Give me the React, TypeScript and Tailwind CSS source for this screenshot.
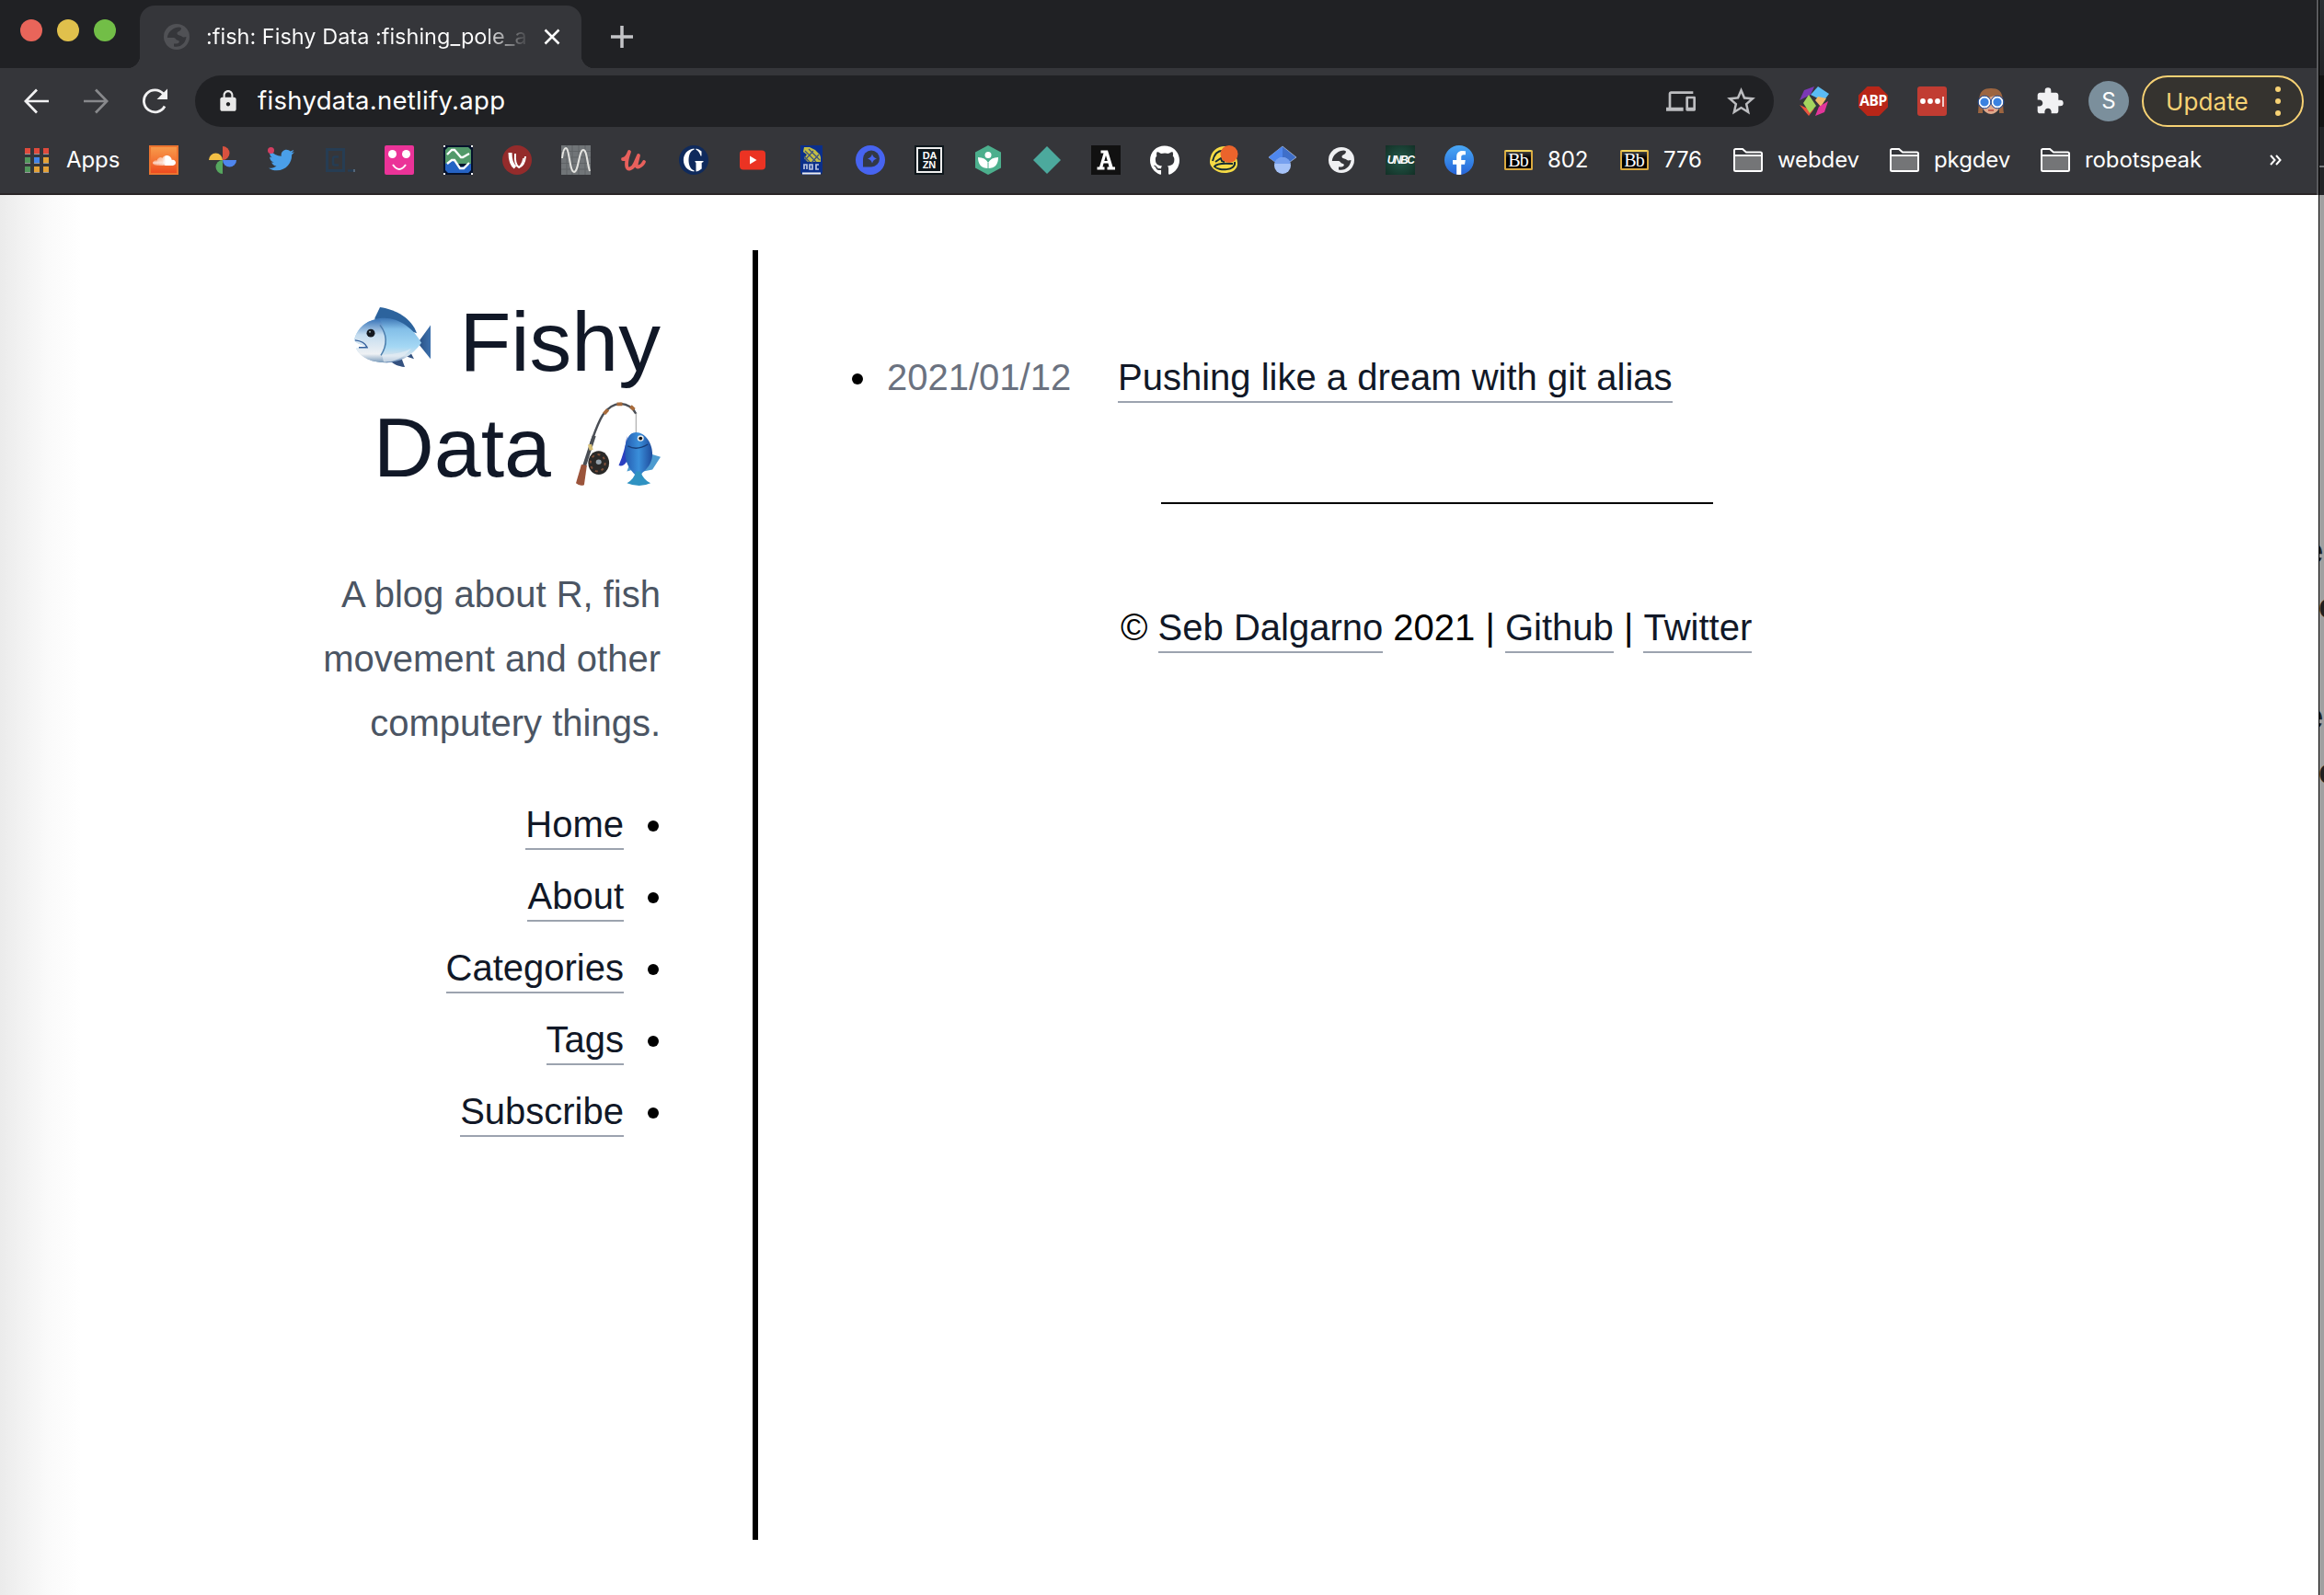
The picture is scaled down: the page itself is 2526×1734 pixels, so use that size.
import React from "react";
import { FaTwitter, FaGithub, FaSoundcloud, FaFacebookF } from "react-icons/fa";
import { MdOutlineDevices, MdStarBorder, MdExtension, MdLock } from "react-icons/md";

const Box = ({ children, className = "" }: { children?: React.ReactNode; className?: string }) => (
  <span className={"flex h-8 w-8 shrink-0 items-center justify-center " + className}>{children}</span>
);

const Svg = ({ children }: { children: React.ReactNode }) => (
  <svg viewBox="0 0 32 32" className="h-8 w-8 shrink-0">{children}</svg>
);

const Globe = ({ fg, bg, className }: { fg: string; bg: string; className: string }) => (
  <svg viewBox="0 0 28 28" className={className}>
    <circle cx="14" cy="14" r="14" fill={fg} />
    <path d="M17 3.500C11 3.500 4.500 8 3.800 15h6.700c2.500 0 2.500 2.500 4.500 2.800 2 .3 2.500 2 1 3-1 .8-3 .8-5 .8v2.800c7.500 1.500 13-4 13.500-10.500-2 .3-3 1.200-5-.3s-4.500-.7-5-3c-.3-2.500 4.500-2 4.500-6z" fill={bg} />
  </svg>
);

const Folder = () => (
  <svg viewBox="0 0 32 26" className="h-[26px] w-8 shrink-0">
    <path d="M1 8h30v16.500H1z" fill="#747577" />
    <path d="M1 8V2.500Q1 1 2.500 1H10l4 3.500h15.500Q31 4.500 31 6v17.500q0 1.500-1.500 1.500h-27Q1 25 1 23.500zh30" fill="none" stroke="#fff" strokeWidth="2" />
    <path d="M1 8h30" stroke="#fff" strokeWidth="2" />
  </svg>
);

const Blackboard = () => (
  <span className="flex h-8 w-8 shrink-0 items-center justify-center">
    <span className="flex h-[22px] w-[31px] items-center justify-center rounded-[2px] border-2 border-[#d9a93f] border-t-[#f2d25a] bg-gradient-to-b from-[#444] via-[#000] to-[#000] font-['Liberation_Serif',serif] text-[20px] leading-none tracking-[-1px] text-white">Bb</span>
  </span>
);

const bookmarks = [
  <Box className="bg-gradient-to-b from-[#f79a4a] to-[#ee4a1f] border-2 border-[#ec7430] text-white"><FaSoundcloud size={25} /></Box>,
  <Svg>
    <path d="M16 16V1a7.500 7.500 0 0 1 0 15z" fill="#d8513f" />
    <path d="M16 16h15a7.500 7.500 0 0 1-15 0z" fill="#4f86ee" />
    <path d="M16 16v15a7.500 7.500 0 0 1 0-15z" fill="#56a75e" />
    <path d="M16 16H1a7.500 7.500 0 0 1 15 0z" fill="#f2bf45" />
  </Svg>,
  <Box className="relative text-[#4a9fe9]"><FaTwitter size={28} /><i className="absolute left-px top-[2px] h-[7px] w-[7px] rounded-full bg-[#d43f61]" /></Box>,
  <Svg>
    <path d="M1.500 4.500h18v23h-18z" fill="none" stroke="#263d53" strokeWidth="3" />
    <path d="M14 12.500h-4q-2 0-2 2v5q0 2 2 2h4M24 27.500h6" fill="none" stroke="#263d53" strokeWidth="2.500" />
    <path d="M31 26v3" stroke="#7397b8" />
  </Svg>,
  <Svg>
    <rect width="32" height="32" rx="2" fill="#eb3398" />
    <circle cx="8.500" cy="9.500" r="4.500" fill="#fff" /><circle cx="23.500" cy="9.500" r="4.500" fill="#fff" />
    <path d="M9 21q7 10 14 0" fill="none" stroke="#fff" strokeWidth="2" />
  </Svg>,
  <Svg>
    <rect width="32" height="32" fill="#06122b" />
    <path d="M0 0h2v2H0zM30 0h2v2h-2zM0 30h2v2H0zM30 30h2v2h-2z" fill="#fff" />
    <path d="M5 2h22l3 3v15H2V5z" fill="#53996a" />
    <path d="M2 20l8-4 8 8 12-4v7l-3 3H5l-3-3z" fill="#2563c4" />
    <path d="M4 10l5-5h3l7 8h2l7-4M4 20l5-4h3l6 9h4l6-6" fill="none" stroke="#fff" strokeWidth="2.300" />
  </Svg>,
  <Svg>
    <circle cx="16" cy="16" r="16" fill="#942b2b" />
    <path d="M8.500 8q0 12 5.500 16" fill="none" stroke="#fff" strokeWidth="4" />
    <path d="M14 9q-1 12 4 15Q24 22 25 12" fill="none" stroke="#fff" strokeWidth="2" />
    <path d="M18 24q4-4 5-10" fill="none" stroke="#fff" strokeWidth="1.500" />
  </Svg>,
  <Svg>
    <rect width="32" height="32" fill="#717578" />
    <path d="M0 6.500h32M0 13h32M0 19.500h32M0 26h32M6 0v32M12 0v32M19 0v32M26 0v32" stroke="#606467" />
    <path d="M1 14C2 6 3 3 5 3c4 0 4 26 9 26S19 5 24 5c4 0 4 14 7 23" fill="none" stroke="#e4e4e0" strokeWidth="2" />
  </Svg>,
  <Svg>
    <path d="M3 15q4 0 7-8-3 8-3 14c0 8 7 4 9-1l4-9-2 8c-1 5 1 5 3 4q3-1 5-5" fill="none" stroke="#e8605c" strokeWidth="3.800" strokeLinecap="round" strokeLinejoin="round" />
  </Svg>,
  <Svg>
    <circle cx="16" cy="16" r="16" fill="#0f2a5c" />
    <path d="M16.500 3.500C1 5 1 27 16.500 28.500v-1.300c-8-1.200-8-21.200 0-22.400zM18.500 3.500q3 .5 6 3v5h-1q-1.500-5-5-6.700zM17.500 17h9v1l-1.800 1v6.500q-3 2.500-6.200 3V19l-1-1z" fill="#fff" />
  </Svg>,
  <Svg>
    <rect x="2" y="5.500" width="28" height="21" rx="4" fill="#eb3323" />
    <path d="M13 11.500v9l7.500-4.500z" fill="#fff" />
  </Svg>,
  <Svg>
    <path d="M4 0h24v28q0 4-4 4H8q-4 0-4-4z" fill="#0b2f8a" />
    <path d="M8 2h6l6 3 5 5 1 3v5H12l-4-4 3-4-4-3z" fill="#c2bd45" />
    <path d="M9 6l12 12M13 4l12 12M8 12l6 6M18 6l-9 10M24 10l-8 9" stroke="#3a5080" strokeWidth="1.200" />
    <path d="M8 26v-5h3v5M14 26v-5h3v5zM24 21h-3v5h3" fill="none" stroke="#b9c3e0" strokeWidth="1.700" />
    <path d="M6 30.500h20" stroke="#eee" strokeWidth="2" />
  </Svg>,
  <Svg>
    <circle cx="16" cy="16" r="16" fill="#4764f0" />
    <path d="M8 24V15a9 9 0 1 1 9 9z" fill="#323846" transform="translate(0 -.5)" />
    <path d="M18 9.500q1 4 5 5-4 1-5 5-1-4-5-5 4-1 5-5z" fill="#4764f0" />
  </Svg>,
  <span className="relative flex h-8 w-8 shrink-0 items-center justify-center bg-[#0e171c]">
    <span className="absolute inset-[2px] border-2 border-[#eee]" />
    <span className="relative pl-px font-['Liberation_Sans',sans-serif] text-[11px] font-bold leading-[10px] text-white">DA<br />ZN</span>
  </span>,
  <Svg>
    <path d="M16 0l14 7.500v17L16 32 2 24.500v-17z" fill="#4caf8d" />
    <circle cx="16" cy="10.500" r="3.500" fill="#fff" />
    <path d="M5 13q8 0 11 6 3-6 11-6 0 12-11 12T5 13z" fill="#fff" />
    <path d="M16 19v6" stroke="#4caf8d" />
  </Svg>,
  <Svg><path d="M16 1l15 15-15 15L1 16z" fill="#4ca99d" /></Svg>,
  <Svg>
    <rect width="32" height="32" fill="#111" />
    <path fillRule="evenodd" d="M10.500 5.500H18l5.500 18H26v3h-8.500v-3h2l-1-4h-5l-1 4h2v3H6.500v-3H9l4.500-15h-3zM16 11l-1.700 6h3.500z" fill="#fff" />
  </Svg>,
  <Box className="text-white"><FaGithub size={33} /></Box>,
  <Svg>
    <path d="M1 17C2 6 9 1 17 1c9 0 15 14 14 20-1 7-8 9-14 9C7 30 0 22 1 17z" fill="#f6db45" />
    <path d="M4 17C6 9 10 5 17 6M7 18l6-4 1 3 3 1M28 18c2 10-18 10-22 5 2-3 8-4 20-3" fill="none" stroke="#152c33" strokeWidth="2" />
    <circle cx="22" cy="9.500" r="9.500" fill="#eb642c" />
  </Svg>,
  <Svg>
    <path d="M16 1l15 12-15 11L1 13z" fill="#3f6fc9" stroke="#b9c6dd" strokeWidth=".7" />
    <path d="M16 1v23L1 13z" fill="#4f87ed" />
    <circle cx="16" cy="22" r="9" fill="#a6c3f8" />
    <path d="M7.500 20a8.500 7 0 0 1 17 0z" fill="#76a0ef" />
  </Svg>,
  <Box><Globe fg="#eff0f2" bg="#35363a" className="h-7 w-7" /></Box>,
  <Box className="bg-[radial-gradient(#245a4a,#123026)] font-['Liberation_Sans',sans-serif] text-[12px] font-bold italic tracking-[-1.5px] text-white">UNBC</Box>,
  <Box className="overflow-hidden rounded-full bg-gradient-to-b from-[#4aa8f5] to-[#2764d8] pt-[6px] text-white"><FaFacebookF size={26} /></Box>,
];

function Fish() {
  return (
    <svg viewBox="0 0 85 67" preserveAspectRatio="none" className="mb-2 mr-[30px] inline-block h-[65px] w-[85px] shrink-0">
      <defs>
        <linearGradient id="fb" x1="0" y1="0" x2="0" y2="1"><stop stopColor="#3b74b4" /><stop offset=".25" stopColor="#83bfe8" /><stop offset=".65" stopColor="#a5d8f4" /><stop offset=".85" stopColor="#d7e3ec" /><stop offset="1" stopColor="#537bab" /></linearGradient>
        <linearGradient id="fh" x1="0" y1="0" x2="0" y2="1"><stop stopColor="#3d78bb" /><stop offset=".35" stopColor="#c4dcef" /><stop offset=".8" stopColor="#eef1f4" /><stop offset="1" stopColor="#7a9bbb" /></linearGradient>
        <linearGradient id="ft"><stop stopColor="#274e82" /><stop offset="1" stopColor="#3d71ad" /></linearGradient>
      </defs>
      <path d="M23 13l6-13c18 3 34 12 40 29z" fill="#2c639d" />
      <path d="M70 40l14-20v38z" fill="url(#ft)" />
      <path d="M40 60l12-4 4 11c-8-1-12-3-16-7zM57 55l6-3 3 6z" fill="#34517f" />
      <path d="M1 37C4 23 16 12 34 12c16 0 32 12 40 28C64 55 50 62 37 62 21 62 8 57 3 46l12-1C10 42 4 41 1 37z" fill="url(#fb)" />
      <path d="M1 37C4 23 16 13 29 14c8 15 8 27 1 42l7 6C21 62 8 57 3 46l12-1C10 42 4 41 1 37z" fill="url(#fh)" />
      <path d="M31 53c7 0 22-1 32-7C54 58 42 62 33 61z" fill="#e4ecf3" opacity=".7" />
      <path d="M29 20q12 16 1 34" fill="none" stroke="#4b7ead" strokeWidth="1.500" />
      <path d="M2 37q10 1 13 8H6" fill="none" stroke="#35609c" strokeWidth="1.500" />
      <circle cx="19" cy="29" r="4.500" fill="#15191f" /><circle cx="18" cy="27.500" r="1" fill="#9aa" />
    </svg>
  );
}

function Rod() {
  return (
    <svg viewBox="0 0 93 100" preserveAspectRatio="none" className="mb-[6px] ml-[27px] inline-block h-[92px] w-[92px] shrink-0">
      <defs>
        <linearGradient id="bf"><stop stopColor="#245bb0" /><stop offset=".5" stopColor="#3a8fda" /><stop offset="1" stopColor="#1e4b9c" /></linearGradient>
      </defs>
      <path d="M16 50C24 26 30 3 49 2q12 1 17 12" fill="none" stroke="#4a4e55" strokeWidth="2.500" />
      <path d="M9 76L20 40" stroke="#4a4e55" strokeWidth="4" />
      <path d="M31 14l4-5M45 2.500h6M60 5l4 4" stroke="#a86b3b" strokeWidth="4" />
      <path d="M66 13v26" stroke="#999" />
      <path d="M14 54l4-1" stroke="#d7bf75" strokeWidth="7" />
      <ellipse cx="25" cy="72" rx="11.500" ry="14" fill="#2a2928" />
      <ellipse cx="24" cy="72" rx="8" ry="10" fill="none" stroke="#80503a" strokeWidth="2" strokeDasharray="3 4" />
      <circle cx="25" cy="71" r="3" fill="#93a0aa" />
      <path d="M6 74l6 1-3 23q-5 2-9-2z" fill="#9b543b" />
      <path d="M56 40q-2 18-9 35 5 2 9-5z" fill="#2b3fc0" /><path d="M78 60l15 5-9 15-10 2zM58 76l-2 6 7-2z" fill="#4d9bd0" />
      <path d="M66 36c10 0 18 13 18 25 0 14-8 19-12 24l-4 3-4-3C56 76 54 68 54 58c0-12 4-22 12-22z" fill="url(#bf)" />
      <path d="M57 52q10 6 22-2" fill="none" stroke="#183e79" strokeWidth="1.500" />
      <circle cx="71" cy="43" r="3.500" fill="#eee" /><circle cx="71" cy="43" r="2" fill="#151515" />
      <path d="M66 82h5q3 10 11 14-12 6-26 0 8-5 10-14z" fill="#2f92c2" />
    </svg>
  );
}

const A = ({ children }: { children: React.ReactNode }) => (
  <a className="inline-block h-[52px] border-b-2 border-[#9ca3af] leading-[48px] text-[#111827]">{children}</a>
);

const Label = ({ children, w }: { children: React.ReactNode; w: string }) => (
  <span className={"whitespace-nowrap " + w}>{children}</span>
);

export default function App() {
  return (
    <div className="flex h-[1734px] w-[2526px] overflow-hidden bg-white font-['Liberation_Sans',Arial,sans-serif]">
      <div className="flex w-[2518px] shrink-0 flex-col">
        <header className="flex h-[212px] shrink-0 flex-col border-b-2 border-[#292526] bg-[#35363a] font-['Inter',sans-serif] text-white">
          <div className="flex h-[74px] shrink-0 bg-[#202124]">
            <div className="flex w-[138px] gap-4 pl-[22px] pt-[21px]">
              <i className="h-6 w-6 shrink-0 rounded-full bg-[#e9655a]" />
              <i className="h-6 w-6 shrink-0 rounded-full bg-[#e0c04c]" />
              <i className="h-6 w-6 shrink-0 rounded-full bg-[#72be47]" />
            </div>
            <i className="mt-auto h-[14px] w-[14px] bg-[radial-gradient(circle_at_0_0,transparent_14px,#35363a_14.5px)]" />
            <div className="mt-[6px] flex h-[68px] w-[480px] items-center rounded-t-[16px] bg-[#35363a] pl-[26px]">
              <Globe fg="#505155" bg="#35363a" className="h-7 w-7 shrink-0" />
              <span className="ml-[18px] w-[353px] overflow-hidden whitespace-nowrap bg-gradient-to-r from-white from-85% to-transparent bg-clip-text text-[23.500px] text-transparent">:fish: Fishy Data :fishing_pole_a</span>
              <svg viewBox="0 0 18 18" className="ml-[14px] h-[18px] w-[18px]"><path d="M1.500 1.500l15 15m0-15l-15 15" stroke="#fff" strokeWidth="2.500" /></svg>
            </div>
            <i className="mt-auto h-[14px] w-[14px] bg-[radial-gradient(circle_at_100%_0,transparent_14px,#35363a_14.5px)]" />
            <svg viewBox="0 0 24 24" className="ml-[18px] mt-7 h-6 w-6"><path d="M12 0v24M0 12h24" stroke="#c3c4c7" strokeWidth="3.500" /></svg>
          </div>

          <div className="flex h-[72px] shrink-0 items-center pl-[26px]">
            <svg viewBox="0 0 28 28" className="h-7 w-7"><path d="M27 14H2.500M14 1.500L1.800 14 14 26.500" fill="none" stroke="#f1f1f2" strokeWidth="2.700" /></svg>
            <svg viewBox="0 0 28 28" className="ml-9 h-7 w-7"><path d="M1 14h24.500M14 1.500L26.200 14 14 26.500" fill="none" stroke="#88898c" strokeWidth="2.700" /></svg>
            <svg viewBox="0 0 28 28" className="ml-[37px] h-7 w-7"><path d="M24 19.500A12 12 0 1 1 22.500 6" fill="none" stroke="#f1f1f2" strokeWidth="2.800" /><path d="M27 .5v11.500H15.500z" fill="#f1f1f2" /></svg>
            <div className="ml-[29px] flex h-14 w-[1716px] items-center rounded-full bg-[#202124]">
              <MdLock className="ml-[23px]" size={26} color="#e8e8e8" />
              <span className="ml-[19px] text-[27.500px] tracking-[0.3px]">fishydata.netlify.app</span>
              <MdOutlineDevices className="ml-auto" size={32} color="#bcbdc0" />
              <MdStarBorder className="ml-[31px] mr-[17px]" size={37} color="#bcbdc0" />
            </div>
            <div className="ml-7 flex items-center gap-8">
              <Svg>
                <path d="M0 15L5 4l11-4-4 9z" fill="#7b38b5" /><path d="M20 0l12 8-6 8-14-7z" fill="#5bbcf4" />
                <path d="M20 11l9 2-6 9-6-7z" fill="#f1b96a" /><path d="M0 20l11 5 5-1-6 8z" fill="#e9533f" />
                <path d="M10 9l8 12-7 8-7-11z" fill="#a4d65e" /><path d="M31 16l-4 12-10 4 4-10z" fill="#e3359a" />
              </Svg>
              <span className="flex h-8 w-8 items-center justify-center bg-[#b82618] font-['Open_Sans',sans-serif] text-[15.500px] font-bold tracking-[-0.5px] [clip-path:polygon(30%_0,70%_0,100%_30%,100%_70%,70%_100%,30%_100%,0_70%,0_30%)]">ABP</span>
              <Svg><rect width="32" height="32" rx="3" fill="#c13c32" /><circle cx="6" cy="16" r="2.900" fill="#fff" /><circle cx="14" cy="16" r="2.900" fill="#fff" /><circle cx="22" cy="16" r="2.900" fill="#fff" /><path d="M28 11v11" stroke="#fff" strokeWidth="1.500" /></Svg>
              <Svg>
                <path d="M2 29C4 15 0 2 16 2s12 13 14 27h-5V12H7v17z" fill="#9d6540" /><path d="M6 12q10-4 20 0v10q-4 8-10 8T6 22z" fill="#e0a98b" />
                <path d="M3 16C3 2 29 2 29 16l-7-7z" fill="#9d6540" /><circle cx="9" cy="17" r="5.500" fill="#3b82e0" stroke="#fff" strokeWidth="1.800" /><circle cx="23" cy="17" r="5.500" fill="#3b82e0" stroke="#fff" strokeWidth="1.800" />
                <circle cx="9" cy="17" r="6.900" fill="none" stroke="#1e4f9f" /><circle cx="23" cy="17" r="6.900" fill="none" stroke="#1e4f9f" /><path d="M13 26h6" stroke="#b8463c" strokeWidth="1.500" />
              </Svg>
              <MdExtension size={32} color="#f1f1f3" />
            </div>
            <span className="ml-[26px] flex h-11 w-11 items-center justify-center rounded-full bg-[#7b8f9c] text-[24px]">S</span>
            <div className="ml-[14px] flex h-14 w-[176px] items-center rounded-full border-[2.500px] border-[#f7d274] bg-[#35332f] pl-6 text-[26px] text-[#f7d274]">
              <span className="w-[88px] whitespace-nowrap tracking-[0.1px]">Update</span>
              <span className="ml-[31px] flex flex-col gap-[7px]"><i className="h-[6px] w-[6px] rounded-full bg-[#f7d274]" /><i className="h-[6px] w-[6px] rounded-full bg-[#f7d274]" /><i className="h-[6px] w-[6px] rounded-full bg-[#f7d274]" /></span>
            </div>
          </div>

          <div className="flex h-14 shrink-0 items-center pl-[27px] text-[24px] tracking-[-0.1px]">
            <span className="grid w-[26px] grid-cols-3 gap-x-1 gap-y-[3px]">
              {["#df4a3c", "#df4a3c", "#df4a3c", "#51975b", "#4384e8", "#e3a136", "#51975b", "#e3a136", "#e3a136"].map((c, i) => (
                <i key={i} className="h-[7px] w-[6px] border-b border-[#97989b]" style={{ backgroundColor: c }} />
              ))}
            </span>
            <Label w="ml-[19px] w-[58px]">Apps</Label>
            <div className="ml-8 flex gap-8">{bookmarks.map((b, i) => <React.Fragment key={i}>{b}</React.Fragment>)}</div>
            <span className="ml-8"><Blackboard /></span>
            <Label w="ml-4 w-[46px]">802</Label>
            <span className="ml-8"><Blackboard /></span>
            <Label w="ml-4 w-[44px]">776</Label>
            <span className="ml-8"><Folder /></span>
            <Label w="ml-4 w-[90px]">webdev</Label>
            <span className="ml-8"><Folder /></span>
            <Label w="ml-4 w-[84px]">pkgdev</Label>
            <span className="ml-8"><Folder /></span>
            <Label w="ml-4 w-[128px]">robotspeak</Label>
            <svg viewBox="0 0 13 12" className="ml-[73px] h-3 w-[13px]"><path d="M1 1l4.500 5L1 11M7 1l4.500 5L7 11" fill="none" stroke="#fff" strokeWidth="2" /></svg>
          </div>
        </header>

        <main className="flex grow bg-[linear-gradient(90deg,#ebebeb_0,#f2f2f2_24px,#fafafa_52px,#fff_88px)]">
          <aside className="flex w-[718px] shrink-0 flex-col items-end text-right">
            <h1 className="mt-[100px] whitespace-nowrap text-[91.500px] leading-[116px] text-[#111827]">
              <span className="flex h-[116px] items-center justify-end"><Fish /><span className="pt-[2px]">Fishy</span></span>
              <span className="flex h-[116px] items-center justify-end"><span>Data</span><Rod /></span>
            </h1>
            <p className="mt-[67px] w-[400px] text-[40px] leading-[70px] text-[#4b5563]">A blog about R, fish<br />movement and other<br />computery things.</p>
            <ul className="mt-[51px] flex flex-col items-end gap-[26px] text-[40px]">
              {["Home", "About", "Categories", "Tags", "Subscribe"].map((t) => (
                <li key={t} className="flex items-center"><A>{t}</A><i className="ml-[26px] mr-[2px] h-3 w-3 rounded-full bg-black" /></li>
              ))}
            </ul>
          </aside>
          <div className="ml-[100px] mt-[60px] h-[1402px] w-[6px] shrink-0 bg-black" />
          <section className="flex flex-col pl-[102px] text-[40px] leading-[48px] text-black">
            <div className="mt-[174px] flex h-[52px] items-start">
              <i className="mt-5 h-3 w-3 rounded-full bg-black" />
              <span className="ml-[26px] w-[251px] text-[#6b7280]">2021/01/12</span>
              <A>Pushing like a dream with git alias</A>
            </div>
            <div className="ml-[336px] mt-[108px] h-[2px] w-[600px] bg-black" />
            <p className="ml-[292px] mt-[110px] whitespace-pre">© <A>Seb Dalgarno</A> 2021 | <A>Github</A> | <A>Twitter</A></p>
          </section>
        </main>
      </div>
      <div className="flex w-[2px] shrink-0 flex-col bg-white"><i className="h-[212px] bg-[#5a5b5e]" /></div>
      <div className="w-px shrink-0 bg-black" />
      {/* Sliver of the window behind */}
      <div className="flex w-[5px] shrink-0 flex-col overflow-hidden bg-[#a0a0a0] text-[38px] font-bold leading-[60px] text-[#202020]">
        <div className="h-[82px] shrink-0 bg-gradient-to-b from-[#2b3135] to-[#222326]" />
        <div className="h-14 shrink-0 bg-[#141414]" />
        <div className="h-[44px] shrink-0 border-b-2 border-[#77787a] bg-[#222326]" />
        <div className="h-[30px] shrink-0 bg-[#222326]" />
        <span className="-ml-[17px] mt-[357px] h-[60px]">e</span>
        <span className="-ml-px h-[60px]">o</span>
        <span className="-ml-[17px] mt-[60px] h-[60px]">e</span>
        <span className="-ml-px h-[60px]">o</span>
      </div>
    </div>
  );
}
